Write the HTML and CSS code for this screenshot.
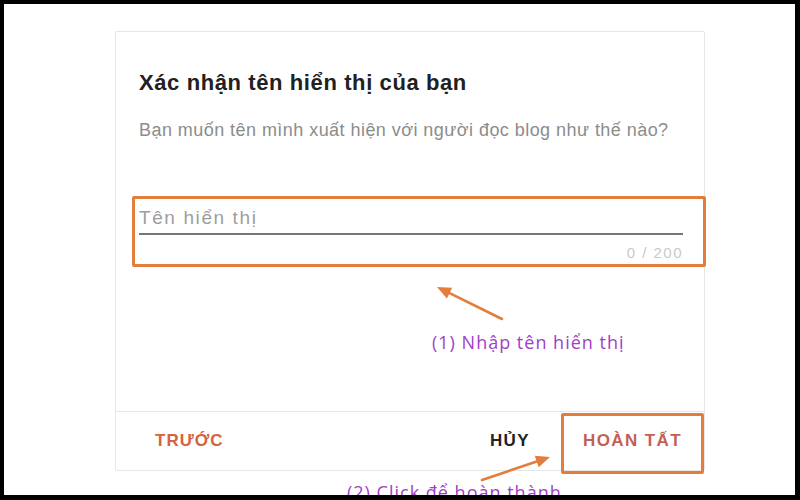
FILE: index.html
```html
<!DOCTYPE html>
<html lang="vi">
<head>
<meta charset="utf-8">
<title>Xác nhận tên hiển thị</title>
<link rel="stylesheet" href="styles.css">
</head>
<body>
<div class="frame">
  <div class="card">
    <div class="card-body">
      <h2 class="title">Xác nhận tên hiển thị của bạn</h2>
      <p class="subtitle">Bạn muốn tên mình xuất hiện với người đọc blog như thế nào?</p>
      <div class="field">
        <div class="field-input">Tên hiển thị</div>
        <div class="counter">0 / 200</div>
      </div>
    </div>
    <div class="card-footer">
      <button class="btn btn-prev">TRƯỚC</button>
      <span class="spacer"></span>
      <button class="btn btn-cancel">HỦY</button>
      <button class="btn btn-done">HOÀN TẤT</button>
    </div>
  </div>

  <div class="mark mark-field"></div>
  <div class="mark mark-done"></div>
  <div class="note note-1">(1) Nhập tên hiển thị</div>
  <div class="note note-2">(2) Click để hoàn thành</div>
  <svg class="arrows" width="800" height="500" viewBox="0 0 800 500">
    <line x1="502" y1="319" x2="449.6" y2="293.2" stroke="#e47d3c" stroke-width="2.6" stroke-linecap="round"/>
    <polygon points="437,287 452.2,287.8 446.9,298.6" fill="#e47d3c"/>
    <line x1="482" y1="480" x2="536.7" y2="461.5" stroke="#e47d3c" stroke-width="2.6" stroke-linecap="round"/>
    <polygon points="550,457 538.7,467.2 534.8,455.8" fill="#e47d3c"/>
  </svg>
</div>
</body>
</html>
```

FILE: styles.css
```css
html, body {
  margin: 0;
  padding: 0;
  background: #ffffff;
}

.frame {
  position: relative;
  width: 800px;
  height: 500px;
  box-sizing: border-box;
  border-style: solid;
  border-color: #000000;
  border-width: 4px 5px 5px 4px;
  overflow: hidden;
  background: #ffffff;
  padding: 27px 0 0 111px;
  font-family: "Liberation Sans", Arial, sans-serif;
}

.card {
  width: 590px;
  height: 440px;
  box-sizing: border-box;
  border: 1px solid #e6e6e6;
  border-radius: 2px;
  display: flex;
  flex-direction: column;
  background: #ffffff;
}

.card-body {
  flex: 1;
  padding: 38px 21px 0 23px;
}

.title {
  margin: 0;
  font-size: 22px;
  line-height: 26px;
  font-weight: 700;
  letter-spacing: 0.6px;
  color: #212121;
}

.subtitle {
  margin: 24px 0 0;
  font-size: 18px;
  line-height: 20px;
  letter-spacing: 0.45px;
  color: #8c8c8c;
}

.field {
  margin-top: 67px;
}

.field-input {
  font-size: 19px;
  line-height: 22px;
  letter-spacing: 1.6px;
  color: #9e9e9e;
  padding-bottom: 4px;
  border-bottom: 2px solid #767676;
}

.counter {
  margin-top: 9px;
  font-size: 15px;
  line-height: 18px;
  letter-spacing: 1.5px;
  color: #c9c9c9;
  text-align: right;
}

.card-footer {
  height: 59px;
  box-sizing: border-box;
  border-top: 1px solid #e6e6e6;
  display: flex;
  align-items: center;
  padding: 0 22px 0 39px;
}

.spacer {
  flex: 1;
}

.btn {
  border: 0;
  background: none;
  padding: 0;
  margin: 0;
  font-family: "Liberation Sans", Arial, sans-serif;
  font-size: 17px;
  font-weight: 700;
  letter-spacing: 1.4px;
  line-height: 20px;
  cursor: pointer;
}

.btn-prev {
  color: #d4643f;
  letter-spacing: 1px;
}

.btn-cancel {
  color: #222222;
  margin-right: 53px;
}

.btn-done {
  color: #c45f55;
}

.mark {
  position: absolute;
  box-sizing: border-box;
  border: 3px solid #e47d3c;
  border-radius: 2px;
}

.mark-field {
  left: 128px;
  top: 192px;
  width: 574px;
  height: 71px;
}

.mark-done {
  left: 557px;
  top: 409px;
  width: 143px;
  height: 61px;
}

.note {
  position: absolute;
  font-family: "Open Sans", "Noto Sans", sans-serif;
  font-size: 18px;
  line-height: 20px;
  letter-spacing: 1px;
  color: #a040c8;
  white-space: nowrap;
}

.note-1 {
  left: 428px;
  top: 328px;
}

.note-2 {
  left: 343px;
  top: 478px;
}

.arrows {
  position: absolute;
  left: -4px;
  top: -4px;
  pointer-events: none;
}
```
